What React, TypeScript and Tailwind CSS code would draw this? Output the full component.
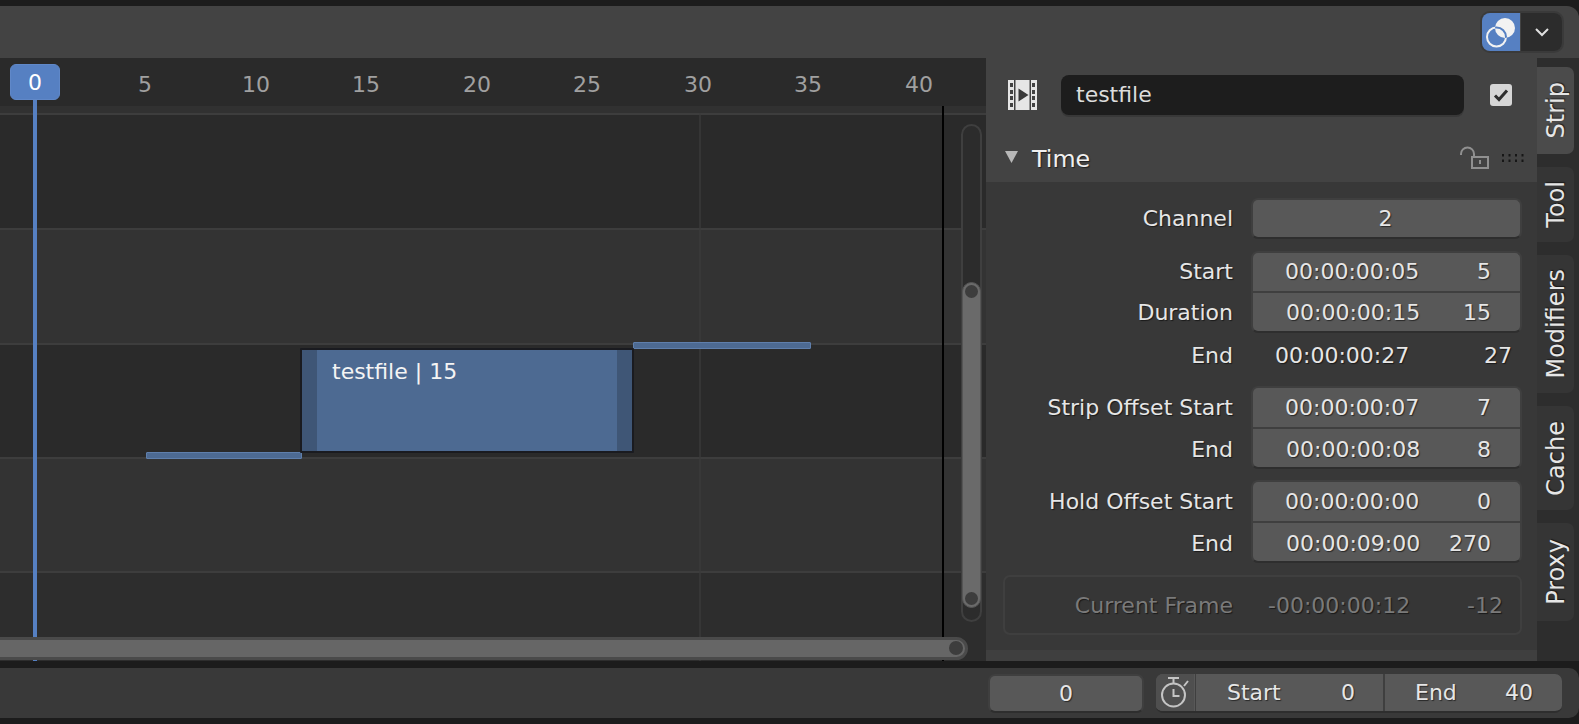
const font = { fontFamily: '"DejaVu Sans", sans-serif' };
const shadow = "[text-shadow:1px_1px_1px_rgba(0,0,0,0.55)]";

const ticks = [
  { l: "5", x: 145 },
  { l: "10", x: 256 },
  { l: "15", x: 366 },
  { l: "20", x: 477 },
  { l: "25", x: 587 },
  { l: "30", x: 698 },
  { l: "35", x: 808 },
  { l: "40", x: 919 },
];

function Row({ light, h, last }: { light?: boolean; h: string; last?: boolean }) {
  return (
    <div
      className={`${h} ${last ? "bg-[#2d2d2d]" : light ? "bg-[#333333]" : "bg-[#2a2a2a]"} border-t-2 border-[#3d3d3d]`}
    />
  );
}

function Timeline() {
  return (
    <div className="relative w-[986px] overflow-hidden flex flex-col bg-[#2a2a2a]">
      <div className="h-[48px] bg-[#2a2a2a]" />
      <div className="h-[7px] bg-[#313131]" />
      <Row h="h-[115px]" />
      <Row h="h-[115px]" light />
      <Row h="h-[114px]" />
      <Row h="h-[114px]" light />
      <Row h="flex-1" last />

      {/* grid line, end frame */}
      <div className="absolute left-[699px] top-[55px] bottom-0 w-[2px] bg-[#3a3a3a] opacity-70" />
      <div className="absolute left-[942px] top-[48px] bottom-0 w-[2px] bg-black" />

      {/* frame numbers */}
      {ticks.map((t) => (
        <span
          key={t.l}
          className="absolute top-[10px] -translate-x-1/2 text-[22px] leading-[34px] text-[#a0a0a0]"
          style={{ left: t.x }}
        >
          {t.l}
        </span>
      ))}

      {/* holds */}
      <div className="absolute left-[146px] top-[394px] w-[156px] h-[7px] bg-[#4d6a92] border border-[#5f7fac] rounded-[1px]" />
      <div className="absolute left-[633px] top-[284px] w-[178px] h-[7px] bg-[#4d6a92] border border-[#5f7fac] rounded-[1px]" />

      {/* strip */}
      <div className="absolute left-[300px] top-[290px] w-[334px] h-[105px] flex border-2 border-[#1a1b20] bg-[#4d6a92] rounded-[1px]">
        <div className="w-[15px] bg-[#3f5676]" />
        <div className="flex-1 pl-[15px] text-[22px] leading-[24px] pt-[10px] text-[#f4f4f4]">testfile | 15</div>
        <div className="w-[15px] bg-[#3f5676]" />
      </div>

      {/* playhead */}
      <div className="absolute left-[33px] top-[6px] bottom-0 w-[4px] bg-[#5680c2]" />
      <div className="absolute left-[10px] top-[6px] w-[50px] h-[36px] rounded-[6px] bg-[#5680c2] border border-[#6088c8] text-white text-[22px] leading-[36px] text-center">
        0
      </div>

      {/* vertical scrollbar */}
      <div className="absolute left-[961px] top-[66px] w-[21px] h-[498px] rounded-full border-2 border-[#3f3f3f] bg-[#2c2c2c]">
        <div className="absolute left-[-1px] right-[-1px] top-[156px] bottom-[12px] rounded-full bg-[#6a6a6a] border border-[#555555]">
          <div className="absolute left-[2px] top-[2px] w-[13px] h-[13px] rounded-full bg-[#3d3d3d]" />
          <div className="absolute left-[2px] bottom-[2px] w-[13px] h-[13px] rounded-full bg-[#3d3d3d]" />
        </div>
      </div>

      {/* horizontal scrollbar */}
      <div className="absolute left-[-30px] top-[579px] w-[998px] h-[23px] rounded-full bg-[#666666] border-[3px] border-[#4a4a4a]">
        <div className="absolute right-[2px] top-[1px] w-[14px] h-[14px] rounded-full bg-[#3d3d3d]" />
      </div>
    </div>
  );
}

function Vals({ t, n, pl = 33, pr = 30, cls = "" }: { t: string; n: string; pl?: number; pr?: number; cls?: string }) {
  return (
    <div
      className={`flex justify-between items-center h-full ${shadow} ${cls}`}
      style={{ paddingLeft: pl, paddingRight: pr }}
    >
      <span>{t}</span>
      <span>{n}</span>
    </div>
  );
}

function Field({ label, children, h = "h-[41px]" }: { label: string; children: React.ReactNode; h?: string }) {
  return (
    <div className={`flex items-center ${h}`}>
      <div className={`w-[247px] text-right ${shadow}`}>{label}</div>
      <div className="ml-[19px] w-[269px] h-full">{children}</div>
    </div>
  );
}

function Group({ rows, tight }: { rows: { label: string; t: string; n: string; pl?: number }[]; tight?: boolean }) {
  return (
    <div className="relative">
      <div
        className={`absolute left-[265px] w-[271px] ${tight ? "top-0 bottom-0" : "-top-[1px] bottom-[1px]"} rounded-[7px] bg-[#585858] border-2 border-[#3f3f3f] border-b-[#2e2e2e]`}
      />
      {rows.map((r, i) => (
        <div key={r.label} className={`relative ${i > 0 && !tight ? "mt-[1px]" : ""}`}>
          {i > 0 && (
            <div className={`absolute left-[265px] w-[271px] ${tight ? "top-[-1px]" : "top-[-2px]"} h-[2px] bg-[#3f3f3f]`} />
          )}
          <Field label={r.label}>
            <Vals t={r.t} n={r.n} pl={r.pl ?? 33} />
          </Field>
        </div>
      ))}
    </div>
  );
}

function FilmIcon() {
  return (
    <svg width="29" height="30" viewBox="0 0 29 30" className="block">
      <path
        fill="#e6e6e6"
        fillRule="evenodd"
        d="M0 0h29v30H0zM2 3v4h3V3zM2 10v4h3v-4zM2 16v4h3v-4zM2 23v4h3v-4zM24 3v4h3V3zM24 10v4h3v-4zM24 16v4h3v-4zM24 23v4h3v-4z"
      />
      <path fill="#434343" d="M6 0h1.5v30H6zM21.5 0H23v30h-1.5z" />
      <path fill="#3a3a3a" d="M10.5 8.5v13l10-6.5z" />
    </svg>
  );
}

function Sidebar() {
  return (
    <div className="w-[551px] flex flex-col bg-[#434343] text-[22px] text-[#e6e6e6]">
      <div className="h-[124px] relative flex flex-col">
        <div className="flex items-center h-[40px] mt-[17px] pl-[22px]">
          <FilmIcon />
          <div className="ml-[24px] w-[403px] h-[40px] rounded-[8px] bg-[#1d1d1d] shadow-[0_2px_0_#383838] pl-[15px] leading-[39px] text-[#dcdcdc]">
            testfile
          </div>
          <div className="ml-[26px] w-[22px] h-[22px] rounded-[3px] bg-[#d6d6d6] flex items-center justify-center">
            <svg width="18" height="18" viewBox="0 0 18 18">
              <path d="M3 9.5l4 4 8-9" fill="none" stroke="#2e2e2e" strokeWidth="3" />
            </svg>
          </div>
        </div>
        <div className="flex items-center h-[44px] mt-[23px] pl-[19px] relative">
          <svg width="13" height="12" viewBox="0 0 13 12" className="block -translate-y-[3px]">
            <path d="M0 0h13L6.5 12z" fill="#b8b8b8" />
          </svg>
          <span className={`ml-[14px] text-[23.8px] text-[#f0f0f0] ${shadow}`}>Time</span>
          <div className="ml-auto mr-[13px] flex items-start -translate-y-[3px]">
            <svg width="30" height="23" viewBox="0 0 30 23" className="block">
              <path d="M1 9V8A6.5 6.5 0 0 1 14 8v2" fill="none" stroke="#909090" strokeWidth="2" />
              <rect x="12" y="11" width="16" height="11" fill="none" stroke="#909090" strokeWidth="2" />
              <rect x="19" y="14" width="2" height="4" fill="#909090" />
            </svg>
            <svg width="22" height="9" viewBox="0 0 22 9" className="block ml-[12px] mt-[8px]">
              <path
                d="M0 0h2v2.500H0zM6.500 0h2v2.500h-2zM13 0h2v2.500h-2zM19.500 0h2v2.500h-2zM0 5.500h2v2.500H0zM6.500 5.500h2v2.500h-2zM13 5.500h2v2.500h-2zM19.500 5.500h2v2.500h-2z"
                fill="#161616"
              />
            </svg>
          </div>
        </div>
      </div>

      <div className="h-[468px] bg-[#383838] pt-[16px]">
        <div className="relative">
          <div className="absolute left-[265px] w-[271px] top-0 h-[41px] rounded-[7px] bg-[#585858] border-2 border-[#3f3f3f] border-b-[#2e2e2e]" />
          <div className="relative">
            <Field label="Channel">
              <div className={`h-full flex items-center justify-center -translate-x-[1px] ${shadow}`}>2</div>
            </Field>
          </div>
        </div>
        <div className="mt-[12px]">
          <Group
            tight
            rows={[
              { label: "Start", t: "00:00:00:05", n: "5" },
              { label: "Duration", t: "00:00:00:15", n: "15", pl: 34 },
            ]}
          />
        </div>
        <Field label="End" h="h-[44px]">
          <Vals t="00:00:00:27" n="27" pl={23} pr={9} />
        </Field>
        <div className="mt-[10px]">
          <Group
            rows={[
              { label: "Strip Offset Start", t: "00:00:00:07", n: "7" },
              { label: "End", t: "00:00:00:08", n: "8", pl: 34 },
            ]}
          />
        </div>
        <div className="mt-[11px]">
          <Group
            rows={[
              { label: "Hold Offset Start", t: "00:00:00:00", n: "0" },
              { label: "End", t: "00:00:09:00", n: "270", pl: 34 },
            ]}
          />
        </div>
        <div className="mt-[11px] ml-[17px] w-[519px] h-[60px] rounded-[7px] border-2 border-[#3f3f3f] bg-[#363636] flex items-center text-[#7a7a7a]">
          <div className={`w-[228px] text-right ${shadow}`}>Current Frame</div>
          <div className="flex-1 h-full">
            <Vals t="-00:00:00:12" n="-12" pl={35} pr={17} />
          </div>
        </div>
      </div>
      <div className="flex-1 bg-[#3f3f3f]" />
    </div>
  );
}

function Tab({ label, h, active }: { label: string; h: string; active?: boolean }) {
  return (
    <div
      className={`${h} w-[37px] rounded-r-[7px] flex items-center justify-center ${active ? "bg-[#4b4b4b]" : "bg-[#353535]"}`}
    >
      <span className={`[writing-mode:vertical-rl] rotate-180 text-[24px] leading-none text-[#e6e6e6] ${shadow}`}>
        {label}
      </span>
    </div>
  );
}

function Tabs() {
  return (
    <div className="flex-1 bg-[#2d2d2d] pt-[9px] flex flex-col gap-[13px]">
      <Tab label="Strip" h="h-[87px]" active />
      <Tab label="Tool" h="h-[75px]" />
      <Tab label="Modifiers" h="h-[138px]" />
      <Tab label="Cache" h="h-[104px]" />
      <Tab label="Proxy" h="h-[98px]" />
    </div>
  );
}

export default function App() {
  return (
    <div className="w-[1579px] h-[724px] bg-[#1c1c1c] overflow-hidden flex flex-col" style={font}>
      <div className="h-[6px]" />
      <div className="h-[52px] bg-[#434343] rounded-tr-[12px] flex justify-end items-start pt-[7px] pr-[17px]">
        <div className="flex w-[80px] h-[38px] rounded-[8px] overflow-hidden shadow-[0_0_0_2px_#3a3a3a]">
          <div className="w-[38px] bg-[#5680c2] flex items-center justify-center">
            <svg width="32" height="32" viewBox="0 0 32 32">
              <defs>
                <clipPath id="overlapDisc">
                  <circle cx="20" cy="12" r="10" />
                </clipPath>
              </defs>
              <circle cx="11.500" cy="21" r="9.500" fill="none" stroke="#f2f2f2" strokeWidth="2" />
              <circle cx="20" cy="12" r="10" fill="#f2f2f2" />
              <circle cx="11.500" cy="21" r="9.500" fill="none" stroke="#5680c2" strokeWidth="2" clipPath="url(#overlapDisc)" />
            </svg>
          </div>
          <div className="flex-1 bg-[#2c2c2c] ml-[1px] flex items-center justify-center">
            <svg width="16" height="10" viewBox="0 0 16 10">
              <path d="M2 2l6 6 6-6" fill="none" stroke="#e0e0e0" strokeWidth="2" />
            </svg>
          </div>
        </div>
      </div>
      <div className="h-[603px] flex">
        <Timeline />
        <Sidebar />
        <Tabs />
      </div>
      <div className="h-[7px]" />
      <div className="h-[50px] bg-[#393939] rounded-tr-[10px] rounded-br-[10px] flex items-center justify-end pr-[17px] text-[22px] text-[#e6e6e6]">
        <div className={`w-[156px] h-[39px] rounded-[7px] bg-[#585858] border-2 border-[#3f3f3f] border-b-[#2e2e2e] flex items-center justify-center ${shadow}`}>
          0
        </div>
        <div className="ml-[12px] flex h-[39px] rounded-[7px] overflow-hidden bg-[#585858] border-b-2 border-[#2e2e2e]">
          <div className="w-[38px] bg-[#4f4f4f] flex items-center justify-center">
            <svg width="30" height="34" viewBox="0 0 30 34">
              <circle cx="13.500" cy="20" r="11.500" fill="none" stroke="#c4c4c4" strokeWidth="2" />
              <path d="M8 3h11M13.500 3v6M24 11l4-5M13.500 14v7h6" fill="none" stroke="#c4c4c4" strokeWidth="2" />
            </svg>
          </div>
          <div className={`w-[188px] ml-[1px] flex items-center justify-between pl-[31px] pr-[28px] border-l border-[#3f3f3f] ${shadow}`}>
            <span>Start</span>
            <span>0</span>
          </div>
          <div className={`w-[179px] flex items-center justify-between pl-[30px] pr-[29px] border-l-2 border-[#3f3f3f] ${shadow}`}>
            <span>End</span>
            <span>40</span>
          </div>
        </div>
      </div>
    </div>
  );
}
